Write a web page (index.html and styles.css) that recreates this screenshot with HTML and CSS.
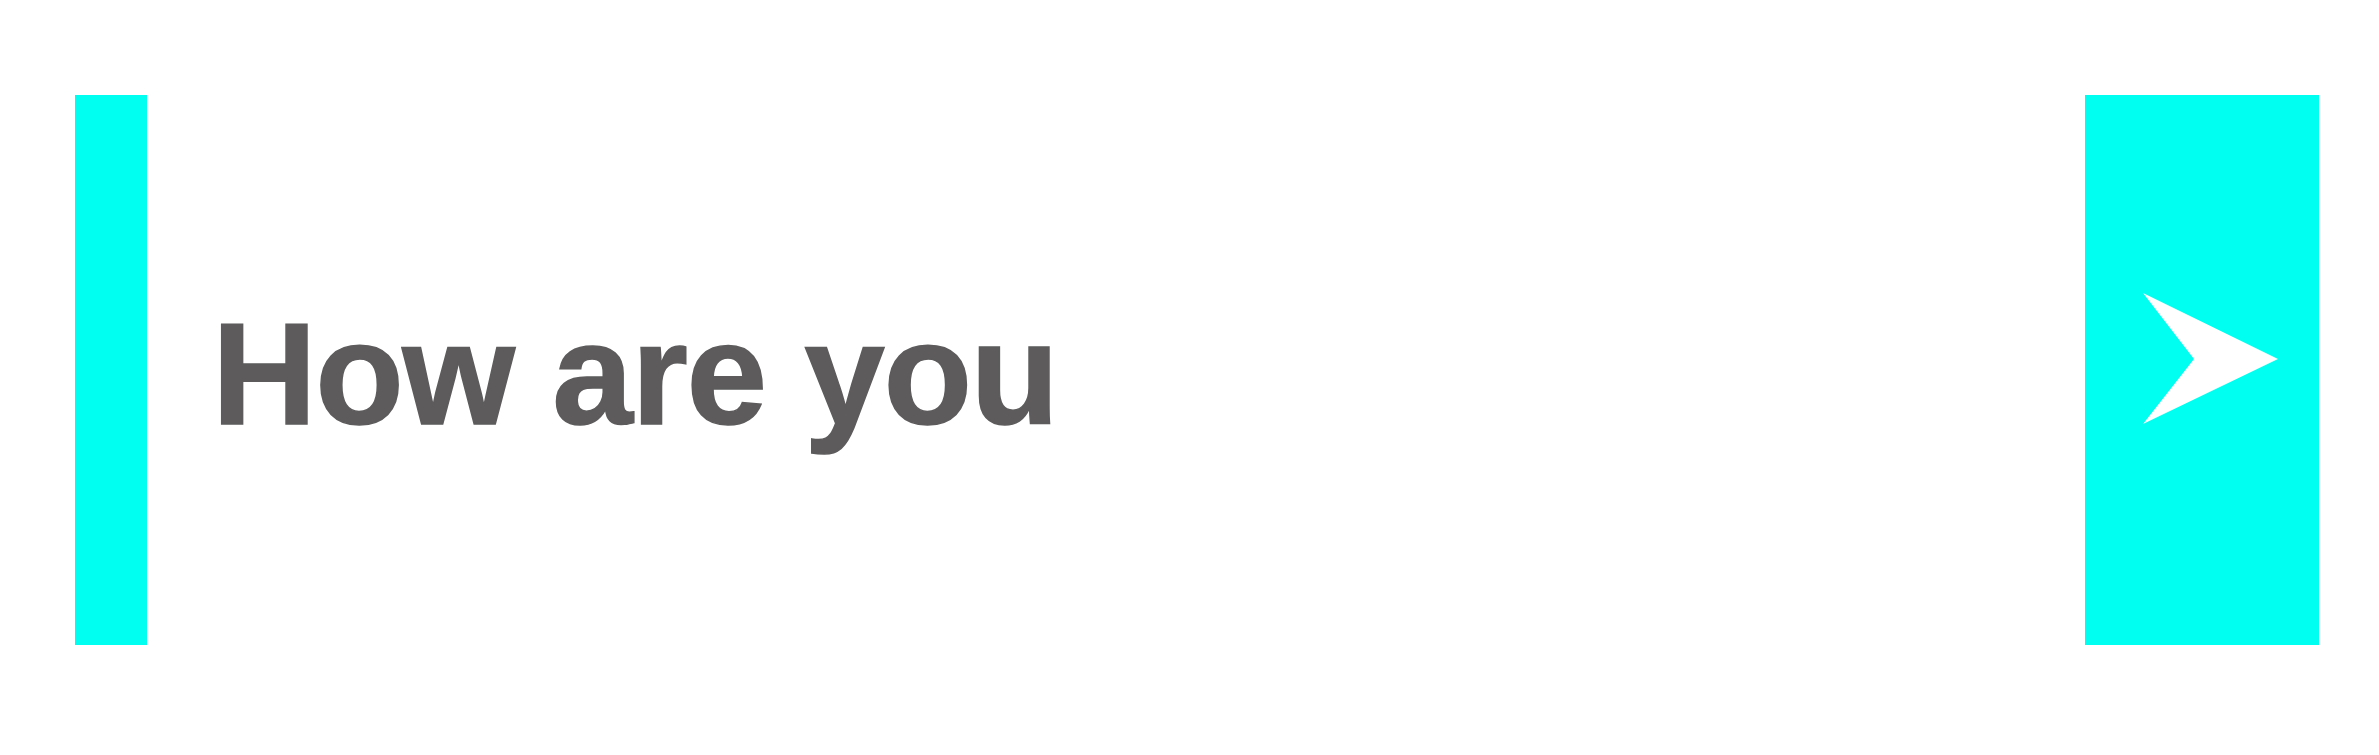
FILE: index.html
```html
<!DOCTYPE html>
<html>
<head>
<meta charset="utf-8">
<link rel="stylesheet" href="styles.css">
</head>
<body>
<div class="row">
  <div class="bar"></div>
  <div class="message">How are you</div>
  <button class="send" aria-label="Send">
    <svg class="arrow" width="135" height="131" viewBox="0 0 135 131">
      <polygon points="0,0 135,66 0,131 51,66" fill="#ffffff"/>
    </svg>
  </button>
</div>
</body>
</html>
```
FILE: styles.css
```css
html, body {
  margin: 0;
  padding: 0;
  background: #ffffff;
}
.row {
  display: flex;
  align-items: center;
  width: 2379px;
  height: 755px;
  box-sizing: border-box;
  padding: 95px 60px 110px 75px;
}
.bar {
  width: 72px;
  height: 550px;
  background: #00fff0;
  flex: none;
}
.message {
  flex: 1;
  margin-left: 65px;
  margin-top: 8px;
  font-family: "Liberation Sans", Arial, sans-serif;
  font-weight: bold;
  font-size: 145px;
  line-height: 140px;
  letter-spacing: -1.5px;
  color: #5d5b5c;
  -webkit-text-stroke: 1.5px #5d5b5c;
  white-space: nowrap;
}
.send {
  flex: none;
  width: 234px;
  height: 550px;
  background: #00fff0;
  border: 0;
  margin: 0;
  padding: 198px 0 0 58px;
  box-sizing: border-box;
  display: flex;
  align-items: flex-start;
  justify-content: flex-start;
}
.arrow {
  display: block;
}
```
